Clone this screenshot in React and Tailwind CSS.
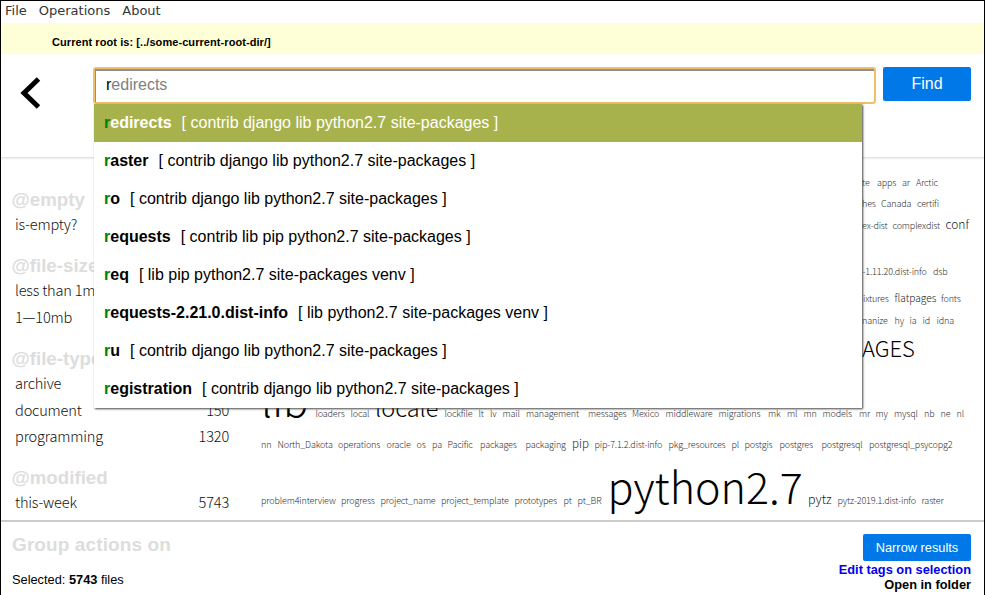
import React from "react";

const suggestions = [
  ["redirects", "contrib django lib python2.7 site-packages"],
  ["raster", "contrib django lib python2.7 site-packages"],
  ["ro", "contrib django lib python2.7 site-packages"],
  ["requests", "contrib lib pip python2.7 site-packages"],
  ["req", "lib pip python2.7 site-packages venv"],
  ["requests-2.21.0.dist-info", "lib python2.7 site-packages venv"],
  ["ru", "contrib django lib python2.7 site-packages"],
  ["registration", "contrib django lib python2.7 site-packages"],
];

const facets = [
  ["@empty", [["is-empty?", ""]]],
  ["@file-size", [["less than 1mb", ""], ["1—10mb", ""]]],
  ["@file-type", [["archive", ""], ["document", "150"], ["programming", "1320"]]],
  ["@modified", [["this-week", "5743"]]],
];

// Each tag: label, left edge, font size (small by default)
const S = 9;
const tagRows = [
  { h: 21, tags: [["te", 862], ["apps", 877], ["ar", 902], ["Arctic", 916]] },
  { h: 20, tags: [["hes", 862], ["Canada", 881], ["certifi", 917]] },
  { h: 48, tags: [["ex-dist", 862], ["complexdist", 892.5], ["conf", 945.5, 12]] },
  { h: 26, tags: [["-1.11.20.dist-info", 862.5], ["dsb", 933]] },
  { h: 23, tags: [["ixtures", 863], ["flatpages", 894.5, 10.2], ["fonts", 941]] },
  { h: 78, tags: [["nanize", 862], ["hy", 894.5], ["ia", 909.5], ["id", 922.5], ["idna", 936.5]] },
  {
    h: 44,
    tags: [["lib", 261, 42], ["loaders", 315.5], ["local", 350.5], ["locale", 375, 23.5], ["lockfile", 444.5], ["lt", 478.5], ["lv", 490], ["mail", 502.5], ["management", 526], ["messages", 588], ["Mexico", 632], ["middleware", 665.5], ["migrations", 718.5], ["mk", 768], ["ml", 787], ["mn", 803.5], ["models", 822.5], ["mr", 859], ["my", 875.5], ["mysql", 894], ["nb", 924], ["ne", 940.5], ["nl", 956.5]],
  },
  {
    h: 42,
    tags: [["nn", 261], ["North_Dakota", 277.5], ["operations", 338], ["oracle", 386.5], ["os", 416.5], ["pa", 432], ["Pacific", 447.5], ["packages", 480], ["packaging", 525.5], ["pip", 572, 11.5], ["pip-7.1.2.dist-info", 594.5], ["pkg_resources", 668.5], ["pl", 731.5], ["postgis", 744.5], ["postgres", 779.5], ["postgresql", 821.5], ["postgresql_psycopg2", 869]],
  },
  {
    h: 20,
    tags: [["problem4interview", 261], ["progress", 341], ["project_name", 380.5], ["project_template", 441], ["prototypes", 514.5], ["pt", 563.5], ["pt_BR", 577.5], ["python2.7", 607.5, 43], ["pytz", 808, 12.5], ["pytz-2019.1.dist-info", 837.5], ["raster", 921.5]],
  },
];

function Tag({ tag, next }) {
  const [label, x, size = S] = tag;
  return (
    <span
      className={`block h-5 shrink-0 whitespace-nowrap ${size > 15 ? "text-black" : size > S ? "text-[#222]" : "tracking-[-0.15px] text-[#2c2c2c]"}`}
      style={{ width: next ? next[1] - x : 60 }}
    >
      <span style={{ fontSize: size }}>{label}</span>
    </span>
  );
}

function TagCloud() {
  return (
    <div className="w-[723px] shrink-0 pt-[15px] text-[9px] leading-5">
      {tagRows.map((row, i) => (
        <div key={i} className="flex items-baseline" style={{ height: row.h, paddingLeft: row.tags[0][1] - 261 }}>
          {row.tags.map((t, j) => (
            <Tag key={j} tag={t} next={row.tags[j + 1]} />
          ))}
        </div>
      ))}
    </div>
  );
}

function SearchBox() {
  return (
    <div className="relative h-[37px] w-[783px]">
      <div className="flex h-[37px] items-center rounded-[3px] border-2 border-[#f0bf6a] bg-white">
        <div className="flex h-full w-full items-center border-t-2 border-l border-[#8f8f8f] pl-[10px] text-[16px] leading-none">
          <span className="-mt-[4px] text-black">r</span>
          <span className="-mt-[4px] text-[#808080]">edirects</span>
        </div>
      </div>
      <ul className="absolute top-[37px] left-px z-10 w-[768px] bg-white text-[16px] shadow-[1px_1px_2px_#444]">
        {suggestions.map(([name, path], i) => (
          <li
            key={name}
            className={`flex h-[38px] items-center pl-[10px] whitespace-pre ${i === 0 ? "bg-[#a7b24d] text-white" : "text-black"}`}
          >
            <b>
              <span className="text-[#008000]">{name[0]}</span>
              {name.slice(1)}
            </b>
            <span className="ml-[10px]">[ {path} ]</span>
          </li>
        ))}
      </ul>
    </div>
  );
}

export default function App() {
  return (
    <div className="flex h-[595px] w-[985px] flex-col overflow-hidden border-t border-r border-l border-black bg-white font-['Liberation_Sans',Arial,sans-serif] text-black">
      <nav className="flex h-[22px] shrink-0 gap-[12px] pl-1 font-['DejaVu_Sans',sans-serif] text-[13px] leading-[19px] text-[#30363a]">
        <span>File</span>
        <span>Operations</span>
        <span>About</span>
      </nav>
      <div className="h-[31px] shrink-0 bg-[#ffffd7] pt-[12px] pl-[51px] text-[11px] leading-[14px] font-bold tracking-[0.07px]">
        Current root is: [../some-current-root-dir/]
      </div>
      <header className="flex h-[104px] shrink-0 border-b border-[#e4e4e4] pt-[13px] shadow-[0_1px_1px_#eee]">
        <svg className="mt-[10px] ml-[19px] h-8 w-[21px] shrink-0" viewBox="0 0 21 32">
          <path d="M18.5 2 L4 16 L18.5 30" fill="none" stroke="black" strokeWidth="5" />
        </svg>
        <div className="-mt-px ml-[52px] pt-px">
          <SearchBox />
        </div>
        <button className="ml-[7px] h-[34px] w-[88px] rounded-[2px] bg-[#0078e7] text-[16px] text-white">Find</button>
      </header>
      <main className="flex h-[362px] shrink-0 overflow-hidden font-['Noto_Sans_CJK_SC',sans-serif] font-light">
        <aside className="w-[260px] shrink-0 pt-[29px] pl-[10.5px]">
          {facets.map(([title, items]) => (
            <section key={title} className="mb-[15px]">
              <h2 className="h-[25px] font-['Liberation_Sans',sans-serif] text-[18.72px] leading-[26px] font-bold text-[#ddd]">{title}</h2>
              {items.map(([label, count]) => (
                <div key={label} className="flex h-[26.4px] w-[217.5px] justify-between pl-[3.5px] text-[14.6px] leading-[24px] tracking-[-0.2px] text-[#111]">
                  <span className="whitespace-nowrap">{label}</span>
                  <span>{count}</span>
                </div>
              ))}
            </section>
          ))}
        </aside>
        <div className="relative">
          <TagCloud />
          <span className="absolute top-[174px] left-[601px] text-[22px] leading-[30px] text-black">AGES</span>
        </div>
      </main>
      <footer className="flex h-[75px] shrink-0 justify-between border-t-2 border-[#ccc] pr-[13px] pl-[11px]">
        <div>
          <h2 className="mt-[11px] text-[19px] leading-[24px] font-bold tracking-[0.1px] text-[#ddd]">Group actions on</h2>
          <p className="mt-[15px] text-[12.8px] leading-[15px]">
            Selected: <b>5743</b> files
          </p>
        </div>
        <div className="flex flex-col items-end pt-[12px] text-[12.8px] leading-[15px] font-bold">
          <button className="mb-px h-[27px] w-[108px] rounded-[2px] bg-[#0078e7] font-normal text-white">Narrow results</button>
          <span className="text-[#0000ee]">Edit tags on selection</span>
          <span>Open in folder</span>
        </div>
      </footer>
    </div>
  );
}
